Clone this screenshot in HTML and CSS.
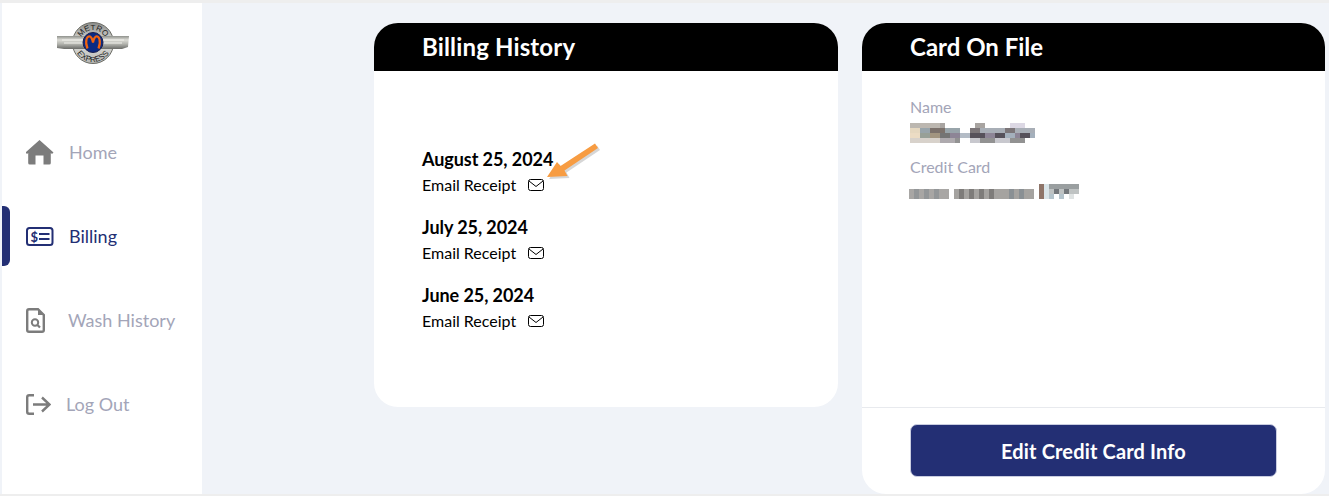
FILE: index.html
```html
<!DOCTYPE html>
<html lang="en">
<head>
<meta charset="utf-8">
<title>Billing</title>
<link rel="stylesheet" href="styles.css">
</head>
<body>
<div class="app">
  <aside class="sidebar">
    <div class="logo-wrap">
      <svg class="logo" width="74" height="44" viewBox="0 0 74 44">
        <defs>
          <linearGradient id="wing" x1="0" y1="0" x2="0" y2="1">
            <stop offset="0" stop-color="#8f918c"/>
            <stop offset=".3" stop-color="#dcdcd6"/>
            <stop offset=".6" stop-color="#b5b6b0"/>
            <stop offset="1" stop-color="#6b6c69"/>
          </linearGradient>
          <linearGradient id="disc" x1="0" y1="0" x2="0" y2="1">
            <stop offset="0" stop-color="#8c8d8a"/>
            <stop offset=".5" stop-color="#e0e0dc"/>
            <stop offset="1" stop-color="#b5b6b2"/>
          </linearGradient>
          <path id="arcTop" d="M24 21 A13 13 0 0 1 50 21"/>
          <path id="arcBottom" d="M18 21 A19 19 0 0 0 56 21"/>
        </defs>
        <circle cx="37" cy="21" r="20.500" fill="url(#disc)" stroke="#6a6b65" stroke-width="1"/>
        <path d="M1 14 H73 L72 25 L66 27 H8 L1 26 Z" fill="url(#wing)"/>
        <path d="M6 18 H68 M8 21 H66" stroke="#f1f1ec" stroke-width="1"/>
        <text class="logo-text"><textPath href="#arcTop" startOffset="50%" text-anchor="middle">METRO</textPath></text>
        <text class="logo-text"><textPath href="#arcBottom" startOffset="50%" text-anchor="middle">EXPRESS</textPath></text>
        <circle cx="37" cy="20.500" r="10" fill="#0b2a83" stroke="#1a1f4d" stroke-width="1"/>
        <path d="M31.500 26.500 C28.500 19 31 13.500 34 14.500 C36 15.500 36.500 18 37 20.500 C37.500 18 38 15.500 40 14.500 C43 13.500 45.500 19 42.500 26.500" fill="none" stroke="#f2630f" stroke-width="2.200"/>
      </svg>
    </div>
    <nav class="nav">
      <a class="nav-item">
        <svg class="icon-home" width="28" height="25" viewBox="0 0 28 25"><path d="M13.500 0 L27.500 12.500 L26 14 L24.800 13 V23 Q24.800 24.500 23.300 24.500 H17.500 V15.500 H9.500 V24.500 H3.700 Q2.200 24.500 2.200 23 V13 L1 14 L-0.500 12.500 Z" fill="#7c7c7c"/></svg>
        <span class="nav-label">Home</span>
      </a>
      <a class="nav-item nav-active">
        <span class="indicator"></span>
        <svg class="icon-bill" width="28" height="19" viewBox="0 0 28 19"><rect x="1" y="1" width="25.500" height="17" rx="2.500" fill="none" stroke="#232f74" stroke-width="2"/><text class="bill-sign" x="4.500" y="14.500">$</text><path d="M13 7 H23.500 M13 12 H23.500" stroke="#232f74" stroke-width="2.200"/></svg>
        <span class="nav-label">Billing</span>
      </a>
      <a class="nav-item">
        <svg class="icon-doc" width="19" height="25" viewBox="0 0 19 25"><path d="M3 1.200 H12 L17.800 7 V22 Q17.800 23.800 16 23.800 H3 Q1.200 23.800 1.200 22 V3 Q1.200 1.200 3 1.200 Z" fill="none" stroke="#7c7c7c" stroke-width="2.400"/><path d="M12 1 V7 H18 Z" fill="#7c7c7c"/><circle cx="9" cy="14.500" r="3.200" fill="none" stroke="#7c7c7c" stroke-width="2"/><path d="M11.500 17 L14 19.500" stroke="#7c7c7c" stroke-width="2.200"/></svg>
        <span class="nav-label label-wash">Wash History</span>
      </a>
      <a class="nav-item">
        <svg class="icon-out" width="25" height="21" viewBox="0 0 25 21"><path d="M8 1.200 H3.200 Q1.200 1.200 1.200 3.200 V17.800 Q1.200 19.800 3.200 19.800 H8" fill="none" stroke="#7c7c7c" stroke-width="2.400"/><path d="M7 10.500 H23 M16 3.500 L23.500 10.500 L16 17.500" fill="none" stroke="#7c7c7c" stroke-width="2.400"/></svg>
        <span class="nav-label label-out">Log Out</span>
      </a>
    </nav>
  </aside>

  <main class="main">
    <section class="card card-billing">
      <h2 class="card-head head-wide">Billing History</h2>
      <div class="billing-body">
        <div class="bill">
          <div class="bill-date">August 25, 2024</div>
          <div class="bill-link">Email Receipt
            <svg class="env" width="16" height="12" viewBox="0 0 16 12"><rect x=".5" y=".5" width="15" height="11" rx="2" fill="none" stroke="#000"/><path d="M1 2 L8 7.500 L15 2" fill="none" stroke="#000"/></svg>
            <svg class="arrow" width="60" height="40" viewBox="0 0 60 40"><path d="M2 35 L12 20 L15.500 24 L50 1.500 L53 6 L19.500 28.500 L22.500 34 Z" fill="#777" opacity=".3" transform="translate(2 2)"/><path d="M2 35 L12 20 L15.500 24 L50 1.500 L53 6 L19.500 28.500 L22.500 34 Z" fill="#f79c42"/></svg>
          </div>
        </div>
        <div class="bill">
          <div class="bill-date">July 25, 2024</div>
          <div class="bill-link">Email Receipt
            <svg class="env" width="16" height="12" viewBox="0 0 16 12"><rect x=".5" y=".5" width="15" height="11" rx="2" fill="none" stroke="#000"/><path d="M1 2 L8 7.500 L15 2" fill="none" stroke="#000"/></svg>
          </div>
        </div>
        <div class="bill">
          <div class="bill-date">June 25, 2024</div>
          <div class="bill-link">Email Receipt
            <svg class="env" width="16" height="12" viewBox="0 0 16 12"><rect x=".5" y=".5" width="15" height="11" rx="2" fill="none" stroke="#000"/><path d="M1 2 L8 7.500 L15 2" fill="none" stroke="#000"/></svg>
          </div>
        </div>
      </div>
    </section>

    <section class="card card-file">
      <h2 class="card-head">Card On File</h2>
      <div class="file-body">
        <div class="field-label">Name</div>
        <svg class="blur-name" width="125" height="20" viewBox="0 0 25 4" shape-rendering="crispEdges">
          <path d="M0 0h6v1H0z" fill="#bcb7b0"/><path d="M6 0h1v1H6zM13 0h2v1h-2z" fill="#a8a4a1"/><path d="M20 0h3v1h-3z" fill="#dcd8e4"/>
          <path d="M0 1h2v1H0z" fill="#e6d8c0"/><path d="M2 1h2v1H2zM7 1h3v1H7z" fill="#98a4aa"/><path d="M4 1h3v1H4z" fill="#7b716b"/><path d="M12 1h2v1h-2zM19 1h2v1h-2z" fill="#7b7578"/><path d="M14 1h5v1h-5zM21 1h4v1h-4z" fill="#a8aeb6"/>
          <path d="M0 2h2v1H0z" fill="#ecdcc4"/><path d="M2 2h2v1H2z" fill="#98a097"/><path d="M4 2h2v1H4z" fill="#a29580"/><path d="M6 2h2v1H6z" fill="#747474"/><path d="M8 2h2v1H8zM15 2h2v1h-2zM21 2h1v1h-1z" fill="#8d8596"/><path d="M10 2h2v1h-2z" fill="#b4bcc6"/><path d="M12 2h3v1h-3zM17 2h2v1h-2zM22 2h2v1h-2z" fill="#56515a"/><path d="M19 2h2v1h-2zM24 2h1v1h-1z" fill="#a4b0bc"/>
          <path d="M0 3h6v1H0z" fill="#d8d2cb"/><path d="M6 3h3v1H6z" fill="#aeaaae"/><path d="M9 3h1v1H9zM14 3h3v1h-3zM20 3h3v1h-3z" fill="#929292"/><path d="M12 3h2v1h-2zM17 3h3v1h-3z" fill="#c8c8ce"/>
        </svg>
        <div class="field-label label-second">Credit Card</div>
        <svg class="blur-card" width="171" height="15" viewBox="0 0 171 15" shape-rendering="crispEdges">
          <path d="M0 5h40v10H0z" fill="#a8a6a4"/><path d="M5 5h5v10H5zM15 5h5v10h-5zM25 5h5v10h-5z" fill="#939698"/>
          <path d="M45 5h80v10H45z" fill="#a5a3a0"/><path d="M50 5h5v10h-5zM60 5h5v10h-5zM70 5h5v10h-5zM80 5h5v10h-5z" fill="#7e7c7a"/><path d="M100 5h5v10h-5zM110 5h5v10h-5z" fill="#8a9094"/>
          <path d="M130 0h5v15h-5z" fill="#8e7468"/><path d="M135 0h5v15h-5z" fill="#d9e4e8"/><path d="M140 0h30v5h-30z" fill="#9a9fa0"/><path d="M140 5h30v5h-30z" fill="#bfc3c3"/><path d="M145 5h5v5h-5zM155 5h5v5h-5z" fill="#74787c"/><path d="M140 10h5v5h-5zM150 10h5v5h-5z" fill="#b5c4cc"/><path d="M160 10h5v5h-5z" fill="#dfe3e3"/>
        </svg>
      </div>
      <div class="file-foot">
        <button class="edit-btn">Edit Credit Card Info</button>
      </div>
    </section>
  </main>
</div>
</body>
</html>
```
FILE: styles.css
```css
* { box-sizing: border-box; }
html, body { margin: 0; height: 100%; }
body {
  background: #f0f3f8;
  border-top: 3px solid #eeeeee;
  border-bottom: 2px solid #eeeeee;
  font-family: Lato, "Open Sans", sans-serif;
  overflow: hidden;
}
.app { display: flex; height: 491px; padding-left: 2px; }
.sidebar {
  width: 200px;
  flex: none;
  background: #fff;
  display: flex;
  flex-direction: column;
}
.logo-wrap { padding: 19px 0 0 54px; height: 107px; }
.logo { display: block; }
.logo-text { font-family: "Liberation Sans", sans-serif; font-size: 8px; fill: #1c1c1c; }
.nav { display: flex; flex-direction: column; }
.nav-item {
  position: relative;
  height: 84px;
  display: flex;
  align-items: center;
  padding-left: 24px;
  color: #a3a5b8;
  font-size: 18px;
}
.nav-active { color: #232f74; }
.indicator {
  position: absolute;
  left: 0;
  top: 12px;
  width: 8px;
  height: 60px;
  background: #232f74;
  border-radius: 0 6px 6px 0;
}
.nav-label { margin-left: 15px; }
.label-wash { margin-left: 23px; }
.label-out { margin-left: 15px; }
.icon-home, .icon-bill, .icon-doc, .icon-out { flex: none; }
.bill-sign { font-size: 13px; font-weight: 700; fill: #232f74; font-family: Lato, sans-serif; }

.main {
  flex: 1;
  display: flex;
  align-items: stretch;
  gap: 24px;
  padding: 20px 4px 0 172px;
}
.card {
  width: 464px;
  flex: none;
  background: #fff;
  border-radius: 24px;
  overflow: hidden;
  display: flex;
  flex-direction: column;
}
.card-file { width: 463px; }
.card-billing { height: 384px; }
.card-head {
  margin: 0;
  height: 48px;
  flex: none;
  background: #000;
  color: #fff;
  font-size: 24px;
  font-weight: 700;
  line-height: 48px;
  padding-left: 48px;
}
.head-wide { letter-spacing: .15px; }
.billing-body { padding: 75px 48px 0; position: relative; }
.bill { height: 68px; }
.bill-date { font-size: 18px; font-weight: 700; color: #000; line-height: 26px; letter-spacing: -.07px; }
.bill-link {
  position: relative;
  margin-top: 1px;
  font-size: 16px;
  color: #000;
  line-height: 24px;
  display: flex;
  align-items: center;
  gap: 12px;
}
.env { flex: none; }
.arrow { position: absolute; left: 123px; top: -31px; }

.file-body { flex: 1; padding: 27px 48px 0; }
.field-label { font-size: 16px; line-height: 18px; color: #a3a5b8; }
.label-second { margin-top: 15px; }
.blur-name { display: block; margin-top: 7px; }
.blur-card { display: block; margin-top: 8px; margin-left: -1px; }
.file-foot {
  flex: none;
  height: 87px;
  border-top: 1px solid #e8eaee;
  padding: 17px 48px 0;
}
.edit-btn {
  display: block;
  width: 367px;
  height: 53px;
  margin-top: -1px;
  background: #232f74;
  border: 1px solid #c9cde0;
  border-radius: 7px;
  color: #fff;
  font-family: Lato, sans-serif;
  font-size: 20px;
  font-weight: 700;
  letter-spacing: .15px;
}
```
